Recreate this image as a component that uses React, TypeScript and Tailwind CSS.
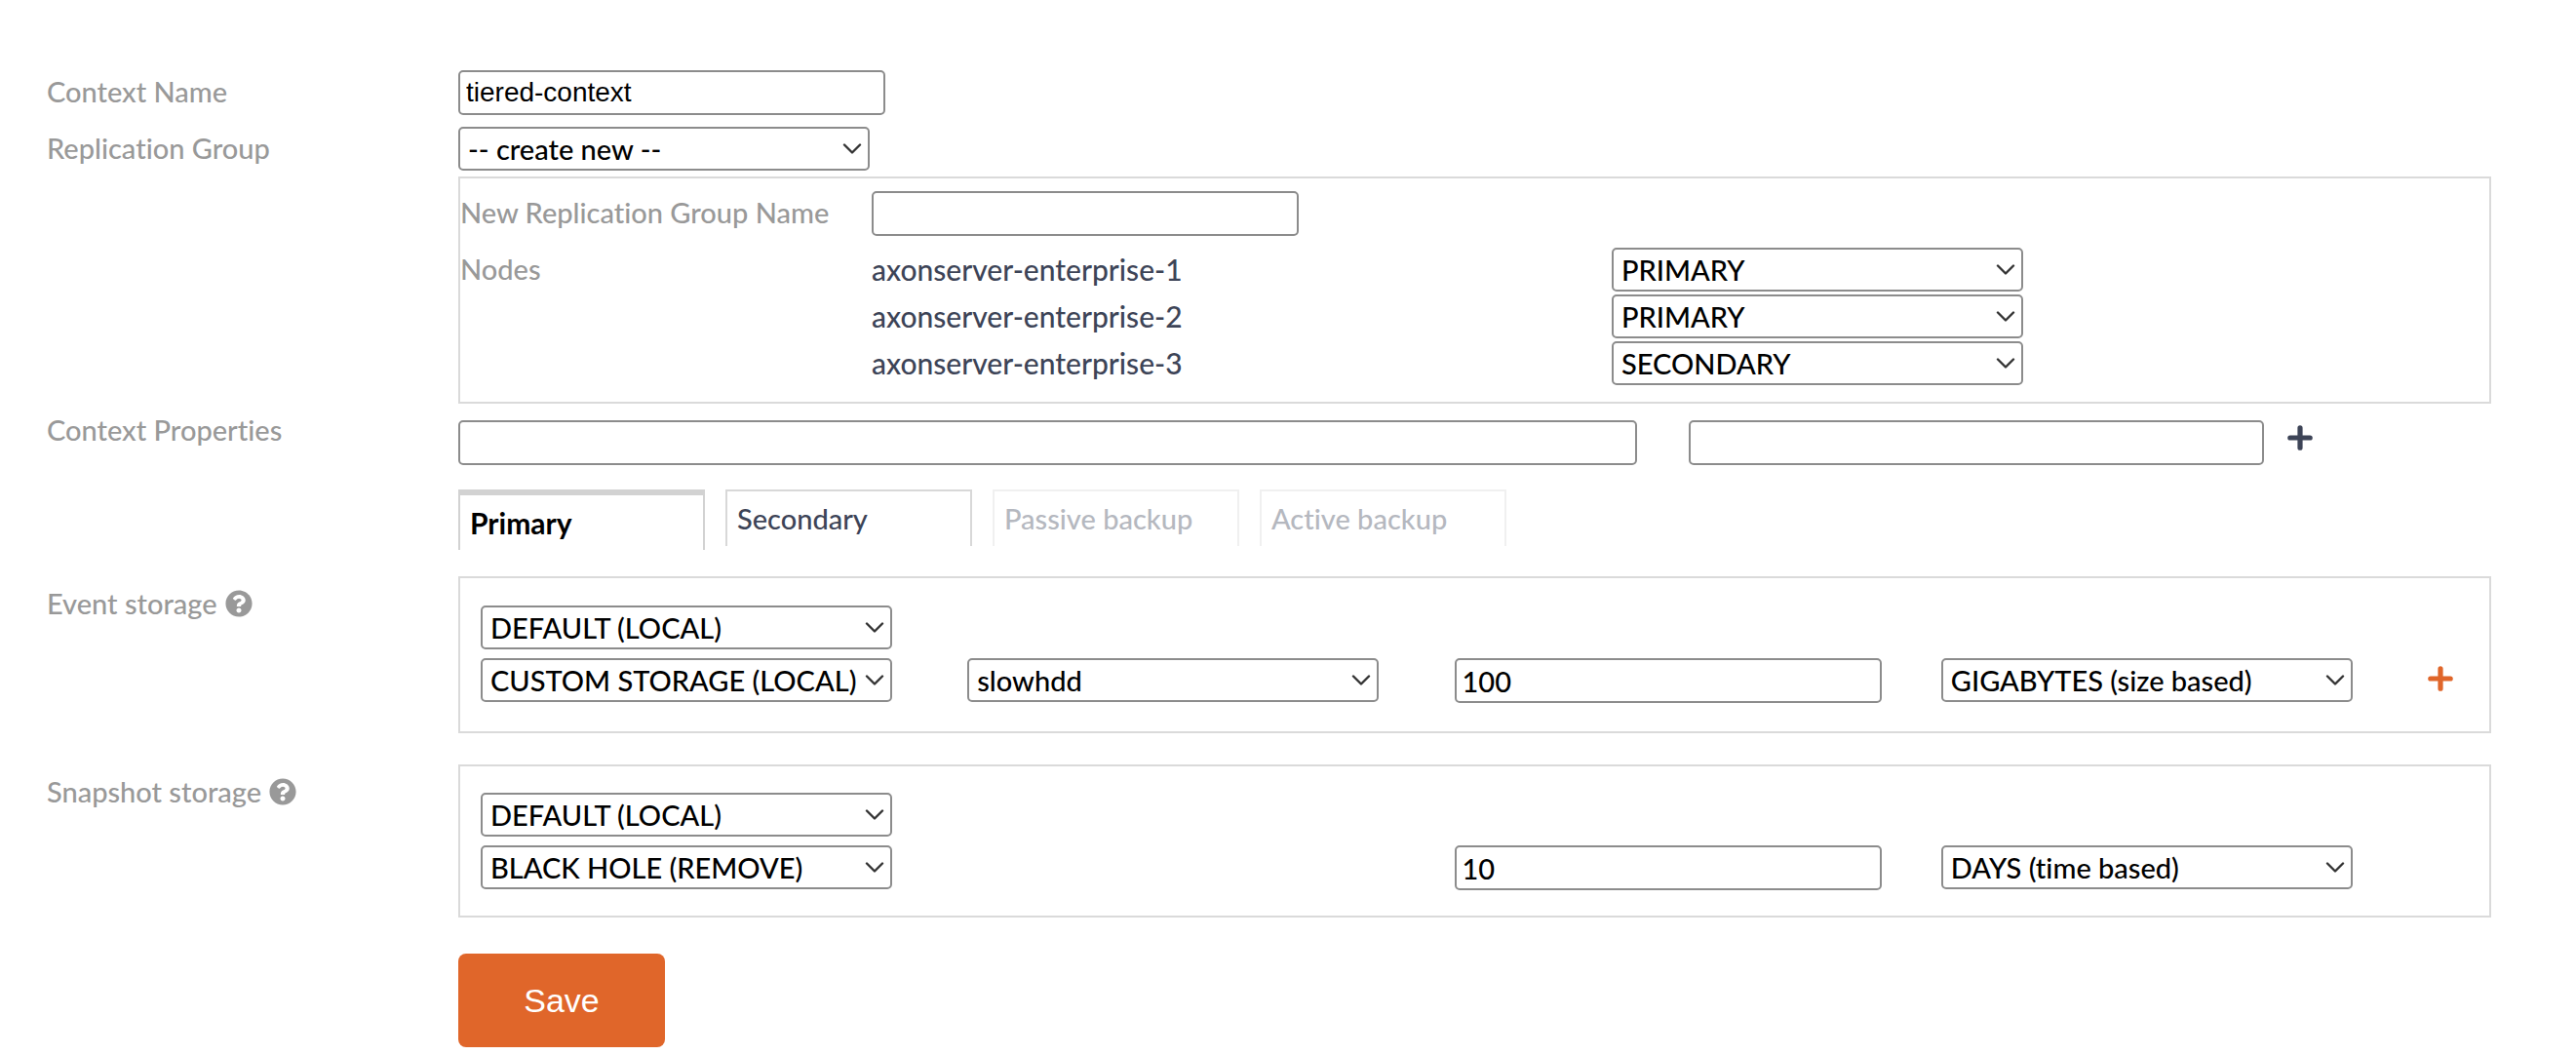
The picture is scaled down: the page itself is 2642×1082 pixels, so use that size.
import React from "react";
import { FaQuestionCircle } from "react-icons/fa";

const fieldBorder = "rounded-[5px] border-2 border-[#8c8c8c] bg-white text-black";

function Select({ id, label, options, className = "w-[422px]" }: { id: string; label: string; options: string[]; className?: string }) {
  return (
    <div className={`relative shrink-0 ${className}`}>
      <select id={id} aria-label={label} className={`block h-[45px] w-full appearance-none pr-[33px] pl-2 text-[29px] leading-[40px] ${fieldBorder}`}>
        {options.map((o) => (
          <option key={o}>{o}</option>
        ))}
      </select>
      <svg viewBox="0 0 20 12" className="pointer-events-none absolute top-[17px] right-2 h-3 w-5" fill="none" stroke="#333" strokeWidth="2.4" strokeLinecap="round" strokeLinejoin="round">
        <path d="M2 1.5 10 9.5 18 1.5" />
      </svg>
    </div>
  );
}

function TextInput({ id, label, value = "", className = "w-[438px]" }: { id: string; label: string; value?: string; className?: string }) {
  return <input id={id} aria-label={label} type="text" defaultValue={value} className={`block h-[46px] px-1.5 ${fieldBorder} ${className}`} />;
}

function Plus({ label, className }: { label: string; className: string }) {
  return (
    <button type="button" aria-label={label} className={className}>
      <svg viewBox="0 0 26 26" className="size-[26px]" fill="none" stroke="currentColor" strokeWidth="5.2" strokeLinecap="round">
        <path d="M13 2.8v20.4M2.8 13h20.4" />
      </svg>
    </button>
  );
}

function Row({ label, htmlFor, help, className = "", labelClass = "leading-[44px]", children }: { label: string; htmlFor?: string; help?: boolean; className?: string; labelClass?: string; children: React.ReactNode }) {
  return (
    <div className={`flex items-start ${className}`}>
      <div className={`flex w-[422px] shrink-0 items-center gap-2 text-[#999] ${labelClass}`}>
        <label htmlFor={htmlFor}>{label}</label>
        {help && <FaQuestionCircle className="size-7" />}
      </div>
      <div className="min-w-0 flex-1">{children}</div>
    </div>
  );
}

const nodes = [
  ["axonserver-enterprise-1", "PRIMARY"],
  ["axonserver-enterprise-2", "PRIMARY"],
  ["axonserver-enterprise-3", "SECONDARY"],
];

const storageGrid = "grid grid-cols-[1fr_1fr_1fr_1fr_42px] items-start";

export default function App() {
  return (
    <form className="bg-white pt-[72px] pr-[87px] pb-2 pl-12 font-['Lato',sans-serif] text-[29px] font-medium text-[#3d4457] [font-variant-ligatures:none]">
      <Row label="Context Name" htmlFor="context">
        <TextInput id="context" label="Context Name" value="tiered-context" className="w-[438px] font-['Liberation_Sans',Arial,sans-serif] text-[28px]" />
      </Row>
      <Row label="Replication Group" htmlFor="group" className="mt-3">
        <Select id="group" label="Replication Group" options={["-- create new --"]} />
        <section className="mt-1.5 border-2 border-[#dadada] pt-[13px] pb-[17px]">
          <div className="flex items-start">
            <label htmlFor="group-name" className="w-[422px] leading-[44px] text-[#999]">New Replication Group Name</label>
            <TextInput id="group-name" label="New Replication Group Name" />
          </div>
          <div className="mt-3 flex items-start">
            <div className="w-[422px] shrink-0 leading-[44px] text-[#999]">Nodes</div>
            <div className="flex flex-1 flex-col gap-[3px]">
              {nodes.map(([name, role]) => (
                <div key={name} className="flex items-start">
                  <label htmlFor={name} className="w-[759px] text-[30px] leading-[44px]">{name}</label>
                  <Select id={name} label={name} options={role === "PRIMARY" ? ["PRIMARY", "SECONDARY"] : ["SECONDARY", "PRIMARY"]} />
                </div>
              ))}
            </div>
          </div>
        </section>
      </Row>
      <Row label="Context Properties" htmlFor="prop-key" className="mt-[5px]">
        <div className="flex pt-3">
          <TextInput id="prop-key" label="Property name" className="w-[58%]" />
          <TextInput id="prop-value" label="Property value" className="ml-[53px] w-[590px]" />
          <Plus label="Add property" className="ml-6 flex h-9 items-center" />
        </div>
      </Row>
      <div className="mt-[25px] ml-[422px] flex items-start gap-[21px]" role="tablist">
        <button type="button" role="tab" aria-selected="true" className="h-[62px] w-[253px] border-2 border-t-[6px] border-b-0 border-[#d2d2d2] px-2.5 text-left text-[30px] font-bold text-black">Primary</button>
        <button type="button" role="tab" aria-selected="false" className="h-[58px] w-[253px] border-2 border-b-0 border-[#d8d8d8] px-2.5 text-left">Secondary</button>
        <button type="button" role="tab" disabled className="h-[58px] w-[253px] border-2 border-b-0 border-[#f0f0f0] px-2.5 text-left text-[#b5b8bf]">Passive backup</button>
        <button type="button" role="tab" disabled className="h-[58px] w-[253px] border-2 border-b-0 border-[#f0f0f0] px-2.5 text-left text-[#b5b8bf]">Active backup</button>
      </div>
      <Row label="Event storage" htmlFor="event-default" help className="mt-[27px]" labelClass="pt-1.5 leading-[44px]">
        <section className="flex flex-col gap-[9px] border-2 border-[#dadada] px-[21px] pt-7 pb-[29px]">
          <Select id="event-default" label="Event storage" options={["DEFAULT (LOCAL)"]} />
          <div className={storageGrid}>
            <Select id="event-tier" label="Second event tier" options={["CUSTOM STORAGE (LOCAL)"]} />
            <Select id="event-disk" label="Storage name" options={["slowhdd"]} />
            <TextInput id="event-size" label="Retention size" value="100" />
            <Select id="event-unit" label="Retention unit" options={["GIGABYTES (size based)"]} />
            <Plus label="Add event tier" className="flex h-[42px] items-center text-[#e0662a]" />
          </div>
        </section>
      </Row>
      <Row label="Snapshot storage" htmlFor="snap-default" help className="mt-8" labelClass="pt-1.5 leading-[44px]">
        <section className="flex flex-col gap-[9px] border-2 border-[#dadada] px-[21px] pt-[27px] pb-[26px]">
          <Select id="snap-default" label="Snapshot storage" options={["DEFAULT (LOCAL)"]} />
          <div className={storageGrid}>
            <Select id="snap-tier" label="Second snapshot tier" options={["BLACK HOLE (REMOVE)"]} />
            <span />
            <TextInput id="snap-time" label="Retention time" value="10" />
            <Select id="snap-unit" label="Retention unit" options={["DAYS (time based)"]} />
          </div>
        </section>
      </Row>
      <button type="submit" className="mt-[37px] ml-[422px] block h-24 w-[212px] rounded-lg bg-[#e0662a] font-['Liberation_Sans',Arial,sans-serif] text-[34px] text-white">Save</button>
    </form>
  );
}
